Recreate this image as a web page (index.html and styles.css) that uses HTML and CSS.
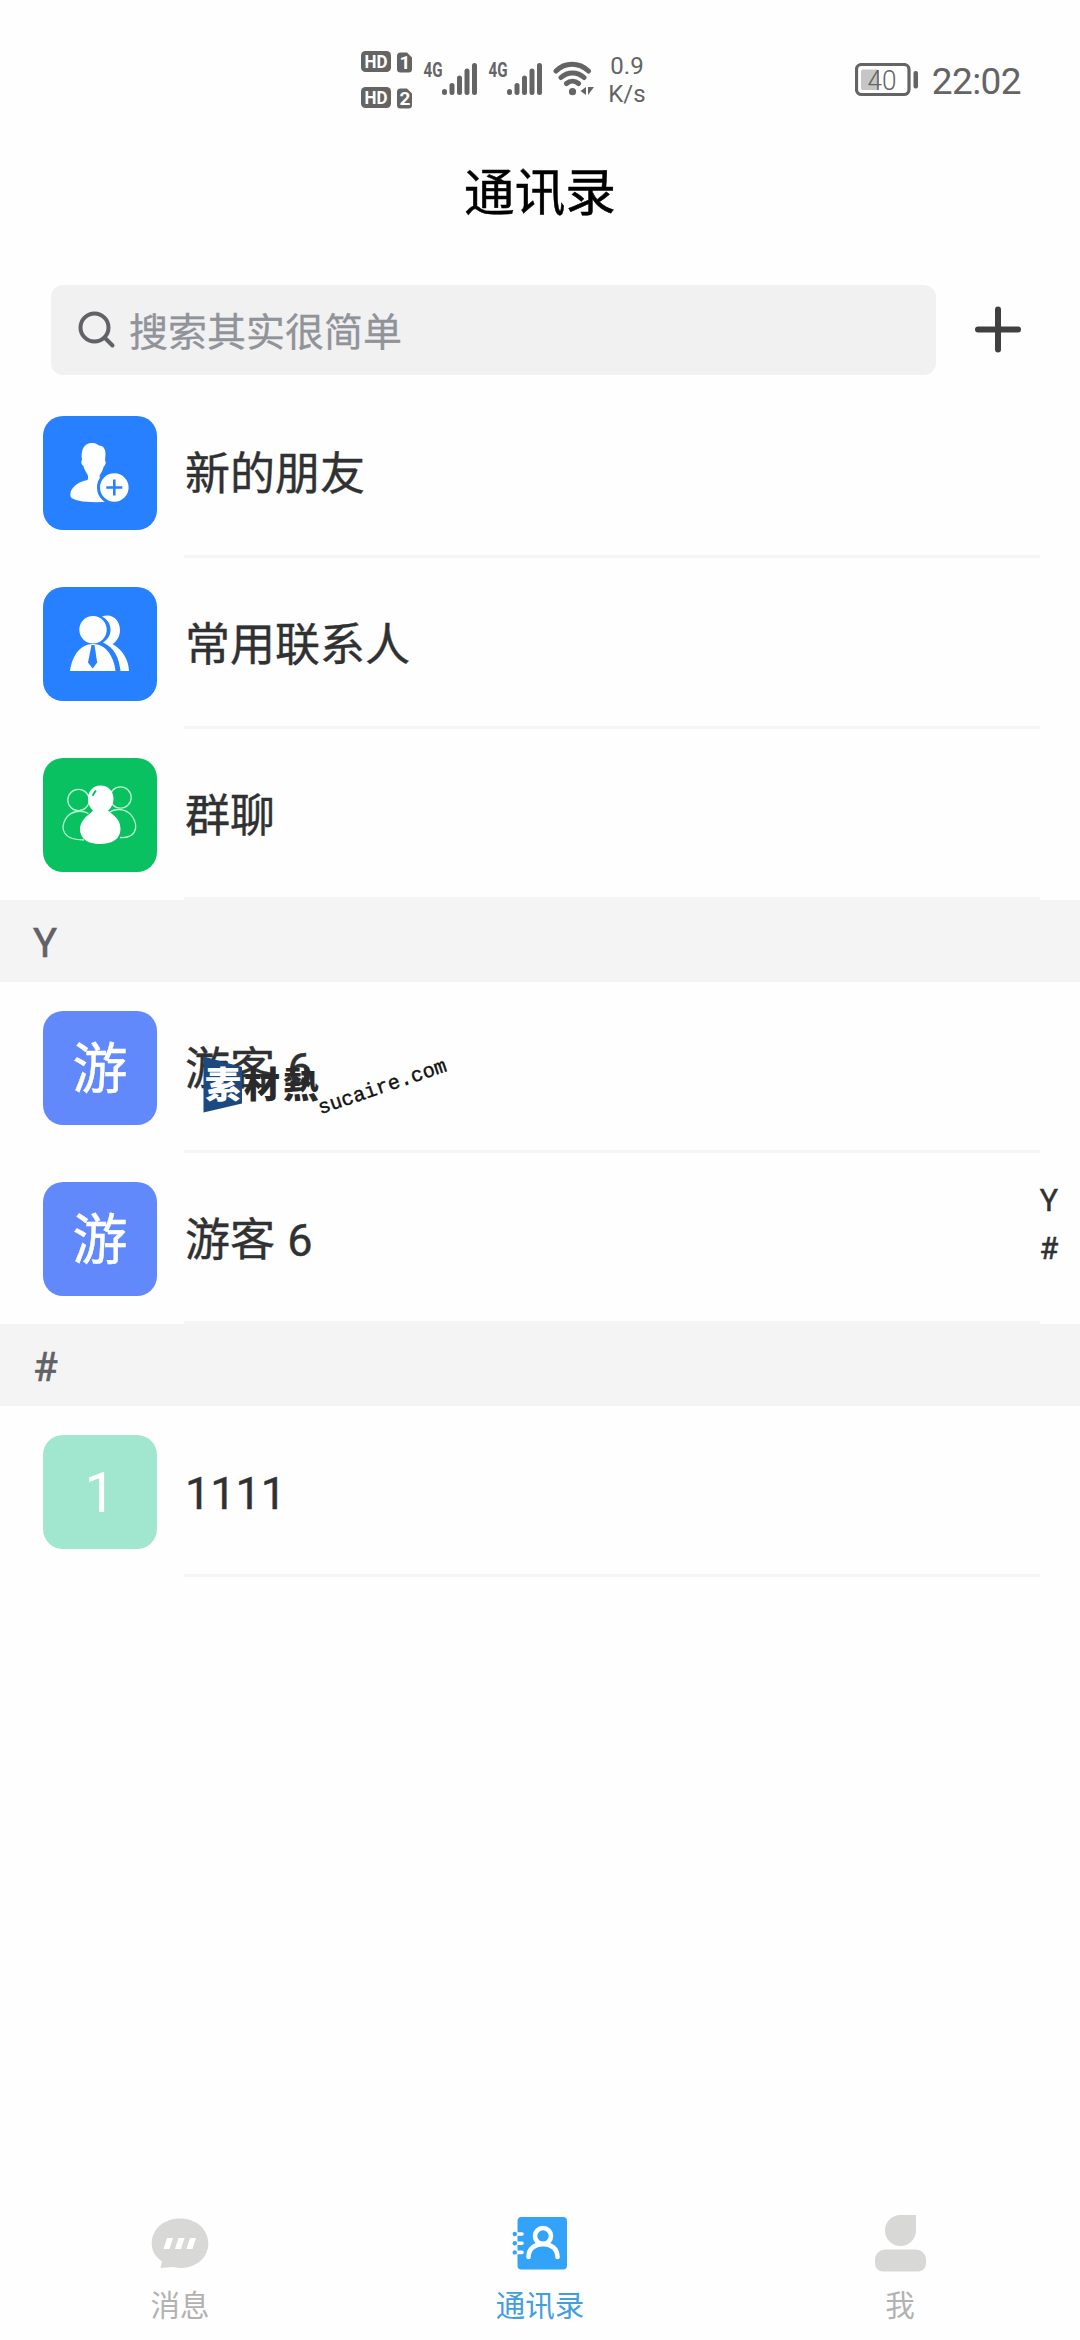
FILE: index.html
```html
<!DOCTYPE html>
<html lang="zh-CN">
<head>
<meta charset="utf-8">
<title>通讯录</title>
<link rel="stylesheet" href="styles.css">
</head>
<body>
<div class="app">
  <header class="status">
    <svg class="hd" width="54" height="60" viewBox="0 0 54 60">
      <rect x="1" y="1" width="30" height="21" rx="4.5"/>
      <path d="M40 2.500H47L52 7.500V19a3.500 3.500 0 0 1-3.500 3.500H40.500A3.500 3.500 0 0 1 37 19V6a3.500 3.500 0 0 1 3.500-3.500Z"/>
      <rect x="1" y="37" width="30" height="21" rx="4.5"/>
      <path d="M40 38.500H47L52 43.500V55a3.500 3.500 0 0 1-3.500 3.500H40.500A3.500 3.500 0 0 1 37 55V42a3.500 3.500 0 0 1 3.500-3.500Z"/>
      <g class="hd-text">
        <text x="4.500" y="18" textLength="23" lengthAdjust="spacingAndGlyphs">HD</text>
        <text x="39.500" y="19">1</text>
        <text x="4.500" y="54" textLength="23" lengthAdjust="spacingAndGlyphs">HD</text>
        <text x="39.500" y="55">2</text>
      </g>
    </svg>
    <svg class="signal" width="55" height="44" viewBox="0 -4 55 44">
      <text class="net" x="0.500" y="15.500" textLength="19" lengthAdjust="spacingAndGlyphs">4G</text>
      <path class="bars" d="M21.500 30.500V31.500M29 24.500V31.500M36.500 17V31.500M44 10V31.500M51.500 4.500V31.500"/>
    </svg>
    <svg class="signal" width="55" height="44" viewBox="0 -4 55 44">
      <text class="net" x="0.500" y="15.500" textLength="19" lengthAdjust="spacingAndGlyphs">4G</text>
      <path class="bars" d="M21.500 30.500V31.500M29 24.500V31.500M36.500 17V31.500M44 10V31.500M51.500 4.500V31.500"/>
    </svg>
    <svg class="wifi" width="42" height="36" viewBox="0 0 42 36">
      <path class="arc" d="M3 10C12 1 26 1 35.500 10M8 16.500C14.500 10.500 24.500 10.500 31 16.500M13.500 22.500C17 19.500 22 19.500 25.500 22.500"/>
      <circle cx="19.500" cy="30.700" r="3.600"/>
      <path d="M27.500 30l5.500-4v8ZM35 26h6l-6 8Z"/>
    </svg>
    <div class="speed"><span>0.9</span><span>K/s</span></div>
    <svg class="battery" width="64" height="34" viewBox="0 0 64 34">
      <rect class="frame" x="1.500" y="1.500" width="52.500" height="30" rx="5"/>
      <rect class="level" x="6" y="6.500" width="18" height="20.500" rx="2"/>
      <rect x="58.500" y="8" width="4.500" height="17.500" rx="2"/>
      <text x="12.500" y="26.500" textLength="29" lengthAdjust="spacingAndGlyphs">40</text>
    </svg>
    <time class="clock">22:02</time>
  </header>

  <h1 class="title">通讯录</h1>

  <div class="search-row">
    <div class="search">
      <svg width="38" height="38" viewBox="0 0 38 38"><circle cx="16.500" cy="16.500" r="14"/><path d="M27 27L34.500 34.500"/></svg>
      <span>搜索其实很简单</span>
    </div>
    <svg class="plus" width="48" height="48" viewBox="0 0 48 48"><path d="M24 3.500V43.500M4 23.500H44"/></svg>
  </div>

  <main class="list">
    <div class="row">
      <div class="tile blue">
        <svg width="114" height="114" viewBox="0 0 114 114">
          <path class="w" d="M49 27c4 0 5.500 1.500 7 2.500 4 0 6.500 3 6.500 8.500l-.5 6.500c1.800 2-.2 5.500-1.300 6C60 55 57 58 56.500 60l1 4.500C66 67 69 73 66 85.500 50 87 30 86 27.500 80.500 26 73 33 66.500 44.500 64c1-2 .8-4-.3-6-2-3-3.200-5.500-3.700-8-2.500-1.500-2.700-4.500-1.500-6C37.500 34 41 27 49 27Z"/>
          <circle class="w cut" cx="71.300" cy="71.500" r="15.800"/>
          <path class="cross" d="M71.300 63.500V79.500M63.300 71.500H79.300"/>
        </svg>
      </div>
      <div class="name">新的朋友</div>
    </div>
    <div class="row">
      <div class="tile blue">
        <svg width="114" height="114" viewBox="0 0 114 114">
          <path class="w" d="M59 29.500C69 25.500 77 33 77 43c0 6-3 11.500-7.500 14C80 63 85.500 73 86 84H77.500C76 71 71.500 60.500 60 55.500 70 50 70.500 35.500 59 29.500Z"/>
          <circle class="w" cx="50" cy="42.700" r="13.700"/>
          <path class="w" d="M27 84C29 68 38 57 50 57S70.500 68 72.500 84Z"/>
          <path class="b" d="M48.500 58h3l2.700 17.500L49.700 81.500 45 75.500Z"/>
        </svg>
      </div>
      <div class="name">常用联系人</div>
    </div>
    <div class="row">
      <div class="tile green">
        <svg width="114" height="114" viewBox="0 0 114 114">
          <g class="line">
            <circle cx="35.500" cy="42" r="10.700"/>
            <circle cx="77.500" cy="39.500" r="10.700"/>
            <path d="M45.500 55.500C37 51 27 53.500 22.500 61 17 71 20 82 41 82"/>
            <path d="M66 54.500C74 49 85 51.500 90 59.500 96 70 92 80.500 77 79.500"/>
          </g>
          <path class="w" d="M57.500 27.500C65.500 27.500 70.500 33.500 70.500 40.500 70.500 46.500 67.500 50.500 65 52.500 67 55.500 77.500 59 77.500 71 77.500 81 69 86 57 86S37 81 37 71C37 61 47.500 56 50 52.500 47 50 45 46 45 40.500 45 33.500 50 27.500 57.500 27.500Z"/>
          <path class="shine" d="M50 37l2.500-4"/>
        </svg>
      </div>
      <div class="name">群聊</div>
    </div>

    <div class="section">Y</div>
    <div class="row">
      <div class="tile indigo">游</div>
      <div class="name">游客 6</div>
      <div class="watermark">
        <svg width="40" height="58" viewBox="0 0 40 58"><path d="M0.500 0.500L39 11V47.500L0.500 56.500Z"/></svg>
        <span class="mark-a">素</span><span class="mark-b">材熱</span>
        <span class="mark-url">sucaire.com</span>
      </div>
    </div>
    <div class="row">
      <div class="tile indigo">游</div>
      <div class="name">游客 6</div>
    </div>

    <div class="section">#</div>
    <div class="row">
      <div class="tile mint">1</div>
      <div class="name">1111</div>
    </div>
  </main>

  <aside class="index"><span>Y</span><span>#</span></aside>

  <nav class="tabs">
    <div class="tab">
      <svg width="60" height="60" viewBox="0 0 60 60">
        <path d="M30 6.500C46 6.500 58.300 17 58.300 31.500S46 56 30 56c-3 0-5-.8-7-1L10.500 56 12 49.500C5.500 45 1.700 39 1.700 31.500 1.700 17 14 6.500 30 6.500Z"/>
        <path class="hole" d="M17 26h6l-3.500 11h-6ZM28.500 26h6l-3.500 11h-6ZM40 26h6l-3.500 11h-6Z"/>
      </svg>
      <span>消息</span>
    </div>
    <div class="tab active">
      <svg width="60" height="60" viewBox="0 0 60 60">
        <rect x="7.500" y="5" width="49.500" height="52.500" rx="4"/>
        <path class="ring" d="M6.500 22H12M6.500 31.200H12M6.500 40.400H12"/>
        <circle cx="4.800" cy="22" r="2.200"/><circle cx="4.800" cy="31.200" r="2.200"/><circle cx="4.800" cy="40.400" r="2.200"/>
        <g class="person"><circle cx="33" cy="24" r="8"/><path d="M18.500 45C18.500 27.500 47.500 27.500 47.500 45"/></g>
      </svg>
      <span>通讯录</span>
    </div>
    <div class="tab">
      <svg width="60" height="60" viewBox="0 0 60 60">
        <path d="M46 3V18.500A15.500 15.500 0 1 1 30.500 3Z"/>
        <path d="M15 37.500H46A10 10 0 0 1 56 47.500V51.500A8 8 0 0 1 48 59.500H13A8 8 0 0 1 5 51.500V47.500A10 10 0 0 1 15 37.500Z"/>
      </svg>
      <span>我</span>
    </div>
  </nav>
</div>
</body>
</html>
```
FILE: styles.css
```css
* { box-sizing: border-box; }
body {
  margin: 0;
  background: #fefefe;
  color: #303133;
  font-family: Roboto, "Noto Sans CJK SC", sans-serif;
}
.app {
  position: relative;
  display: flex;
  flex-direction: column;
  width: 1080px;
  height: 2340px;
  overflow: hidden;
}

/* Status bar */
.status {
  display: flex;
  align-items: center;
  height: 160px;
  padding: 0 59px 0 360px;
  color: #646464;
  fill: #646464;
}
.hd, .signal, .wifi, .battery { flex: none; }
.hd { margin-right: 9px; }
.signal { margin-right: 10px; }
.hd-text { fill: #fff; font-size: 19px; font-weight: 700; }
.net { font-size: 21px; font-weight: 700; }
.bars { stroke: #646464; stroke-width: 5; stroke-linecap: round; fill: none; }
.signal, .wifi { position: relative; top: -1px; }
.arc { stroke: #646464; stroke-width: 5; stroke-linecap: round; fill: none; }
.speed {
  display: flex;
  flex-direction: column;
  width: 50px;
  margin-left: 7px;
  text-align: center;
  font-size: 24px;
  line-height: 28px;
}
.battery { margin-left: auto; margin-right: 13px; }
.battery .frame { fill: none; stroke: #646464; stroke-width: 3.2; }
.battery .level { fill: #c6c6c6; }
.battery text { font-size: 28px; font-weight: 300; }
.clock { padding-top: 3px; font-size: 37px; line-height: 40px; letter-spacing: -0.6px; }

.title {
  margin: 0;
  height: 125px;
  padding-top: 3px;
  color: #000;
  font-size: 50.6px;
  font-weight: 400;
  line-height: 62px;
  text-align: center;
  -webkit-text-stroke: 0.5px currentColor;
}

/* Search */
.search-row {
  display: flex;
  align-items: center;
  gap: 38px;
  height: 90px;
  padding-left: 51px;
  margin-bottom: 12px;
}
.search {
  display: flex;
  align-items: center;
  gap: 13px;
  width: 885px;
  height: 90px;
  padding-left: 27px;
  border-radius: 12px;
  background: #f1f1f1;
  color: #909399;
  font-size: 39px;
}
.search span { padding-bottom: 3px; -webkit-text-stroke: 0.3px currentColor; }
.search svg { fill: none; stroke: #606266; stroke-width: 4; stroke-linecap: round; }
.plus { fill: none; stroke: #404040; stroke-width: 6; stroke-linecap: round; }

/* Contact list */
.row {
  position: relative;
  display: flex;
  gap: 27px;
  height: 171px;
  padding-left: 43px;
}
.tile {
  flex: none;
  width: 114px;
  height: 114px;
  margin-top: 29px;
  border-radius: 20px;
  color: #fff;
  font-size: 55px;
  line-height: 117px;
  text-align: center;
}
.tile svg { display: block; }
.blue { background: #2680ff; }
.green { background: #09c160; }
.indigo { background: #6289fb; -webkit-text-stroke: 0.5px currentColor; }
.mint { background: #a1e7cf; }
.w { fill: #fff; }
.b { fill: #2680ff; }
.cut { stroke: #2680ff; stroke-width: 3; }
.cross { stroke: #2680ff; stroke-width: 2.6; }
.line { fill: none; stroke: #b9f5d3; stroke-width: 1.3; }
.shine { stroke: #09c160; stroke-width: 2; stroke-linecap: round; }
.name {
  width: 856px;
  height: 171px;
  padding-left: 1px;
  border-bottom: 3px solid #f5f5f5;
  font-size: 45px;
  line-height: 175px;
  word-spacing: 1px;
  -webkit-text-stroke: 0.4px currentColor;
}
.section {
  height: 82px;
  padding-left: 33px;
  background: #f4f4f4;
  color: #606266;
  font-size: 40px;
  line-height: 88px;
  -webkit-text-stroke: 0.6px currentColor;
}

/* Site mark laid over the first visitor's name */
.watermark {
  position: absolute;
  left: 203px;
  top: 74px;
  width: 250px;
  height: 60px;
  color: #2a2a2a;
  font-size: 36px;
  font-weight: 900;
  line-height: 40px;
}
.watermark svg { position: absolute; left: 0; top: 0; fill: #1c4a80; }
.mark-a, .mark-b, .mark-url { position: absolute; white-space: nowrap; }
.mark-a { left: 2px; top: 10px; color: #fff; }
.mark-b { left: 41px; top: 10px; letter-spacing: 3px; }
.mark-url {
  left: 119px;
  top: 43px;
  color: #111;
  font: 400 20.4px/20px "Liberation Mono", monospace;
  -webkit-text-stroke: 0.4px currentColor;
  transform: rotate(-18.8deg);
  transform-origin: 0 100%;
}

/* Letter index on the right edge */
.index {
  position: absolute;
  right: 20px;
  top: 1177px;
  display: flex;
  flex-direction: column;
  width: 22px;
  text-align: center;
  font-size: 30.5px;
  line-height: 48px;
  -webkit-text-stroke: 0.5px currentColor;
}

/* Bottom tabs */
.tabs {
  display: flex;
  height: 128px;
  margin-top: auto;
}
.tab {
  display: flex;
  flex: 1;
  flex-direction: column;
  align-items: center;
  gap: 3px;
  color: #b2b2b2;
  fill: #d8d8d7;
  font-size: 29.5px;
}
.tab span { line-height: 62px; }
.tab.active { color: #439fdc; fill: #33a3fa; }
.hole { fill: #fff; }
.ring { stroke: #fff; stroke-width: 3.6; stroke-linecap: round; }
.person { fill: none; stroke: #fff; stroke-width: 4.6; stroke-linecap: round; }
```
